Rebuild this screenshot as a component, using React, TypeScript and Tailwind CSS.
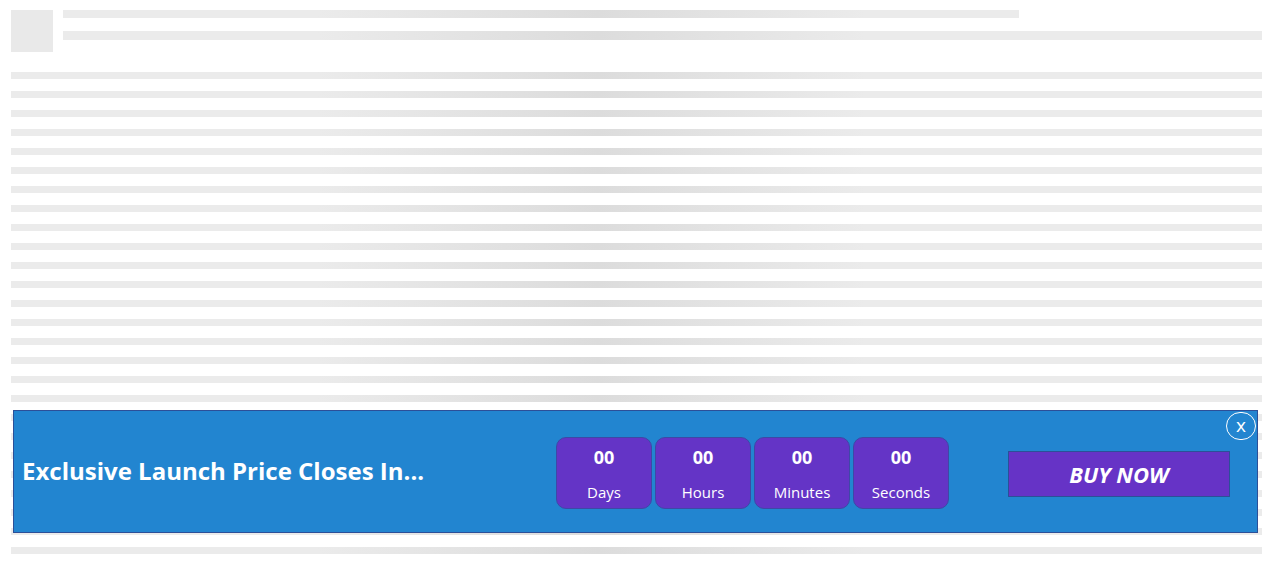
import type { FC } from "react";

const shimmer =
  "bg-[#ebebeb] bg-[linear-gradient(90deg,#ebebeb_25%,#dcdcdc_47%,#ebebeb_68%)] bg-fixed";

const UNITS = ["Days", "Hours", "Minutes", "Seconds"];

const SkeletonPage: FC = () => (
  <div className="px-[11px] pt-[10px]">
    <div className="flex gap-[10px]">
      <div className="w-[42px] h-[42px] bg-[#e9e9e9] shrink-0" />
      <div className="flex-1 flex flex-col">
        <div className={`h-[8px] w-[956px] ${shimmer}`} />
        <div className={`h-[9px] mt-[13px] ${shimmer}`} />
      </div>
    </div>
    <div className="mt-[20px] flex flex-col gap-[12px]">
      {Array.from({ length: 26 }).map((_, i) => (
        <div key={i} className={`h-[7px] ${shimmer}`} />
      ))}
    </div>
  </div>
);

const CountdownBar: FC = () => (
  <div className="fixed left-[13px] bottom-[35px] w-[1245px] h-[123px] bg-[#2285d0] border border-[#2c4f98] flex items-center">
    <h2 className="w-[542px] pl-[8px] text-[24px] font-bold text-white leading-[36px] mt-[-2px]">
      Exclusive Launch Price Closes In...
    </h2>
    <div className="flex gap-[3px] mt-[3px]">
      {UNITS.map((unit) => (
        <div
          key={unit}
          className="w-[96px] h-[72px] rounded-[10px] bg-[#6434c6] border border-[#3e48a6] flex flex-col items-center pt-[6px] text-white"
        >
          <span className="text-[18px] font-bold leading-[27px]">00</span>
          <span className="text-[15px] leading-[22px] mt-[10px]">{unit}</span>
        </div>
      ))}
    </div>
    <button className="ml-[59px] mt-[5px] w-[222px] h-[46px] bg-[#6633c6] border border-[#2c4f98] text-white text-[22px] font-bold italic flex items-center justify-center">
      BUY NOW
    </button>
    <button className="absolute top-[1px] right-[1px] w-[30px] h-[28px] rounded-full border border-white text-white text-[19px] leading-none flex items-center justify-center pb-[2px]">
      x
    </button>
  </div>
);

const App: FC = () => (
  <div
    className="w-[1273px] h-[568px] overflow-hidden bg-white relative"
    style={{ fontFamily: '"Open Sans", "Noto Sans", sans-serif' }}
  >
    <SkeletonPage />
    <CountdownBar />
  </div>
);

export default App;
